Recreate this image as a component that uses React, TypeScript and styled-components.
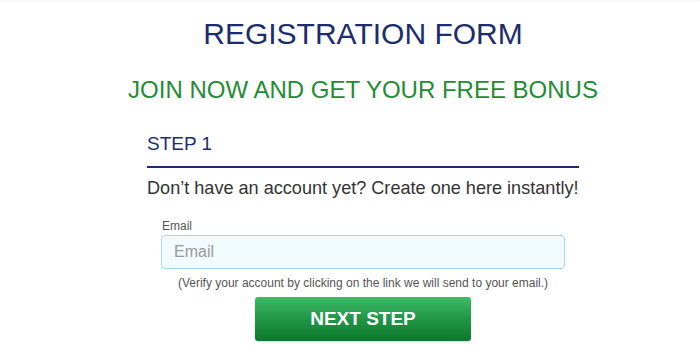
import { FC } from "react";
import styled, { createGlobalStyle } from "styled-components";

const colors = {
  navy: "#1b2d6e",
  green: "#1f8d35",
  text: "#333333",
  label: "#555555",
  white: "#ffffff",
};

const GlobalStyle = createGlobalStyle`
  html, body {
    margin: 0;
    padding: 0;
    background: ${colors.white};
    font-family: "Liberation Sans", Arial, sans-serif;
  }
`;

const Page = styled.div`
  min-height: 362px;
  padding: 16px 0 20px 26px;
  box-sizing: border-box;
  box-shadow: inset 0 3px 3px -2px rgba(0, 0, 0, 0.06);
  display: flex;
  flex-direction: column;
  align-items: center;
`;

const Title = styled.h1`
  margin: 0;
  font-size: 30px;
  line-height: 36px;
  font-weight: normal;
  color: ${colors.navy};
`;

const Subtitle = styled.h2`
  margin: 24px 0 0;
  font-size: 24px;
  line-height: 28px;
  font-weight: normal;
  color: ${colors.green};
`;

const Card = styled.div`
  width: 432px;
  margin-top: 29px;
  display: flex;
  flex-direction: column;
`;

const StepHeading = styled.h3`
  margin: 0;
  padding-bottom: 11px;
  font-size: 19px;
  line-height: 22px;
  font-weight: normal;
  color: ${colors.navy};
  border-bottom: 2px solid ${colors.navy};
`;

const Intro = styled.p`
  margin: 9px 0 0;
  font-size: 18.1px;
  line-height: 22px;
  color: ${colors.text};
`;

const Field = styled.div`
  margin: 20px auto 0;
  width: 404px;
  display: flex;
  flex-direction: column;
`;

const Label = styled.label`
  font-size: 12px;
  line-height: 14px;
  color: ${colors.label};
  margin-left: 1px;
  margin-bottom: 2px;
`;

const Input = styled.input`
  box-sizing: border-box;
  width: 100%;
  height: 34px;
  padding: 0 12px;
  font-family: inherit;
  font-size: 16px;
  color: ${colors.text};
  background: #f1fafd;
  border: 1px solid #a9d8e8;
  border-radius: 4px;
  outline: none;

  &::placeholder {
    color: #999999;
  }
`;

const Hint = styled.p`
  margin: 7px 0 0;
  font-size: 12px;
  line-height: 14px;
  color: ${colors.label};
  text-align: center;
`;

const NextButton = styled.button`
  align-self: center;
  margin-top: 7px;
  width: 216px;
  height: 44px;
  border: 0;
  border-radius: 3px;
  background: linear-gradient(to bottom, #3fba66 0%, #23994a 45%, #0e772c 100%);
  color: ${colors.white};
  font-family: inherit;
  font-size: 19px;
  font-weight: bold;
  cursor: pointer;
  box-shadow: 0 1px 2px rgba(0, 0, 0, 0.15);
`;

const App: FC = () => {
  return (
    <>
      <GlobalStyle />
      <Page>
        <Title>REGISTRATION FORM</Title>
        <Subtitle>JOIN NOW AND GET YOUR FREE BONUS</Subtitle>
        <Card>
          <StepHeading>STEP 1</StepHeading>
          <Intro>Don’t have an account yet? Create one here instantly!</Intro>
          <Field>
            <Label htmlFor="email">Email</Label>
            <Input id="email" type="email" placeholder="Email" />
          </Field>
          <Hint>(Verify your account by clicking on the link we will send to your email.)</Hint>
          <NextButton type="button">NEXT STEP</NextButton>
        </Card>
      </Page>
    </>
  );
};

export default App;
